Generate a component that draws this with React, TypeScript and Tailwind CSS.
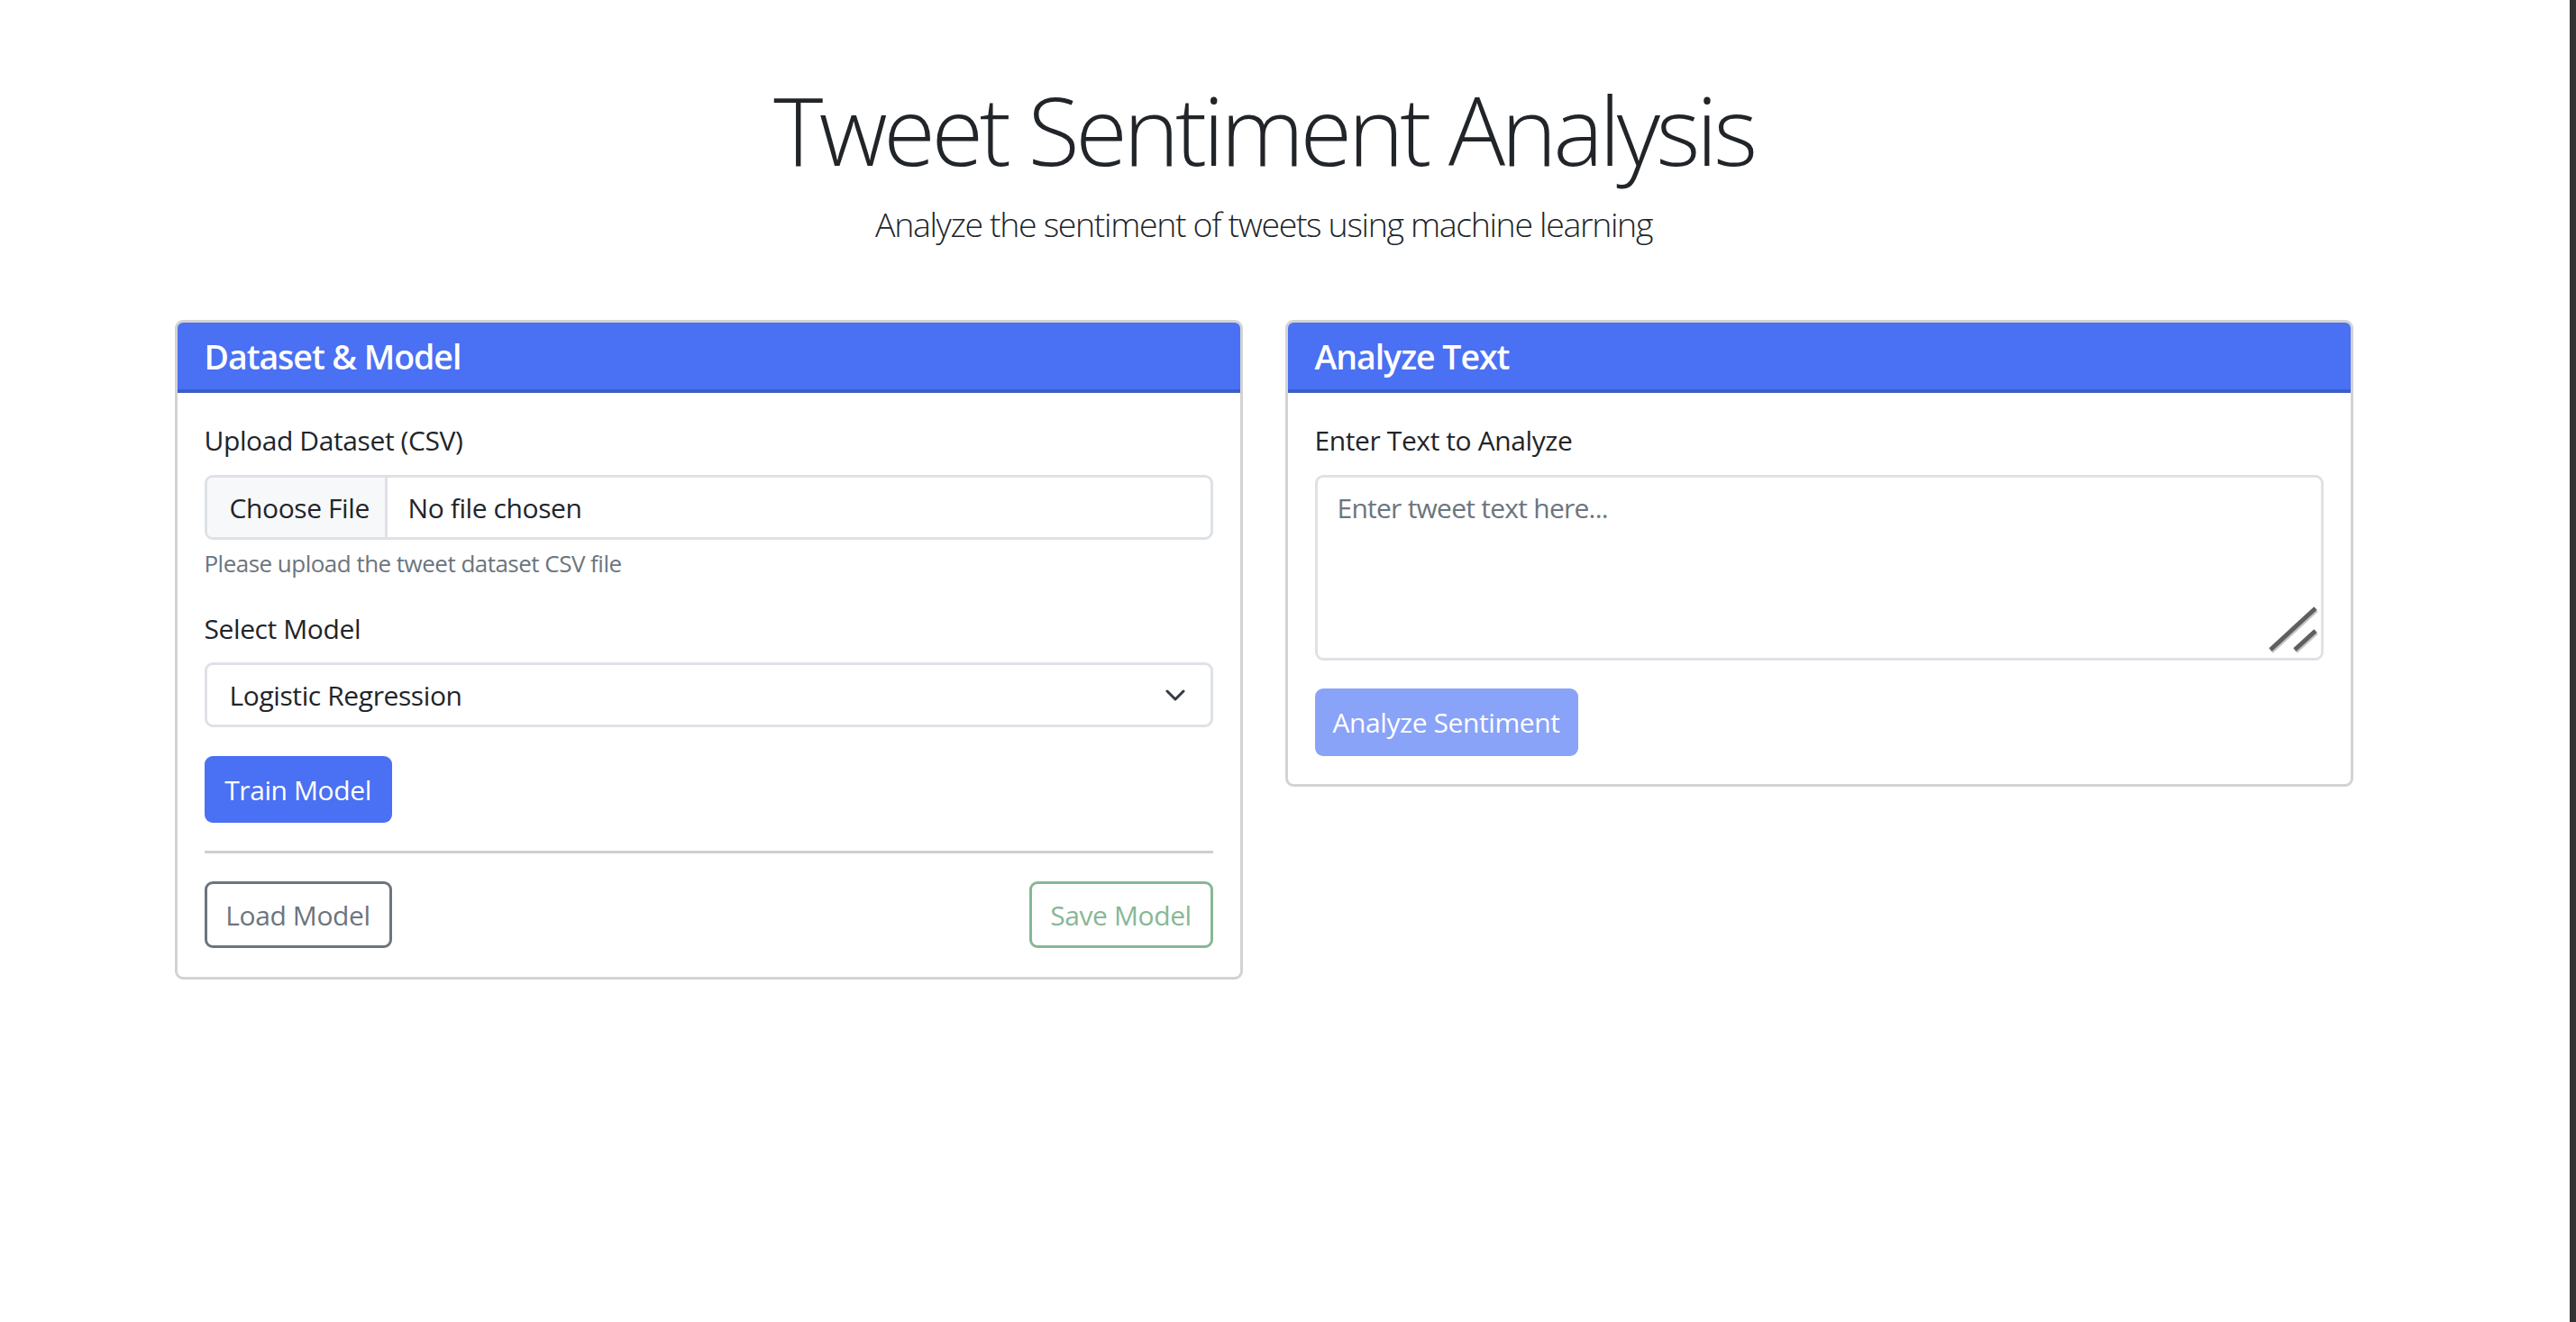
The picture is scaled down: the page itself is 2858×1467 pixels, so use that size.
export default function App() {
  return (
    <div className="flex min-h-[1467px] w-full bg-white text-[#212529] font-['Open_Sans','Noto_Sans',sans-serif] tracking-[-0.025em]">
      <div className="w-[2804px] shrink-0">
        <div className="mx-auto w-[2417px]">
          <header className="pt-[81px] text-center">
            <h1 className="text-[105px] font-light leading-[126px] tracking-[-0.042em]">Tweet Sentiment Analysis</h1>
            <p className="mt-[14px] text-[37.5px] font-light leading-[56px] tracking-[-0.036em]">
              Analyze the sentiment of tweets using machine learning
            </p>
          </header>

          <div className="mt-[78px] flex items-start gap-[47px]">
            {/* Card 1 */}
            <div className="w-[1185px] overflow-hidden rounded-[9px] border-[3px] border-[#d3d3d3]">
              <div className="flex h-[78px] items-center border-b-[4px] border-[#3c5fc8] bg-[#4a70f3] px-[30px]">
                <h5 className="text-[37.5px] font-semibold leading-[45px] tracking-[-0.028em] text-white">Dataset &amp; Model</h5>
              </div>
              <div className="px-[30px] pb-[32px] pt-[30px]">
                <label className="block text-[30px] leading-[45px]">Upload Dataset (CSV)</label>
                <div className="mt-[16px] flex h-[72px] overflow-hidden rounded-[9px] border-[3px] border-[#dee2e6] text-[30px] leading-[45px]">
                  <div className="flex w-[200px] shrink-0 items-center whitespace-nowrap border-r-[3px] border-[#dee2e6] bg-[#f7f8fa] px-[25px]">
                    Choose File
                  </div>
                  <div className="flex items-center whitespace-nowrap px-[23px]">No file chosen</div>
                </div>
                <p className="mt-[7px] text-[26px] leading-[39px] tracking-[-0.02em] text-[#6c757d]">
                  Please upload the tweet dataset CSV file
                </p>

                <label className="mt-[30px] block text-[30px] leading-[45px]">Select Model</label>
                <div className="mt-[15px] flex h-[72px] items-center justify-between rounded-[9px] border-[3px] border-[#dee2e6] pl-[25px] pr-[28px] text-[30px] leading-[45px]">
                  <span>Logistic Regression</span>
                  <svg width="22" height="13" viewBox="0 0 22 13" fill="none">
                    <path d="M2 2 L11 11 L20 2" stroke="#343a40" strokeWidth="3" strokeLinecap="round" strokeLinejoin="round" />
                  </svg>
                </div>

                <button className="mt-[32px] flex h-[74px] w-[208px] items-center justify-center rounded-[9px] bg-[#4a70f3] text-[30px] leading-[45px] text-white">
                  Train Model
                </button>

                <hr className="mt-[31px] border-0 border-t-[3px] border-[#cfcfcf]" />

                <div className="mt-[31px] flex items-center justify-between">
                  <button className="flex h-[74px] w-[208px] items-center justify-center rounded-[9px] border-[3px] border-[#6c757d] text-[30px] leading-[45px] text-[#6c757d]">
                    Load Model
                  </button>
                  <button className="flex h-[74px] w-[204px] items-center justify-center rounded-[9px] border-[3px] border-[#87b795] text-[30px] leading-[45px] text-[#87b795]">
                    Save Model
                  </button>
                </div>
              </div>
            </div>

            {/* Card 2 */}
            <div className="w-[1185px] overflow-hidden rounded-[9px] border-[3px] border-[#d3d3d3]">
              <div className="flex h-[78px] items-center border-b-[4px] border-[#3c5fc8] bg-[#4a70f3] px-[30px]">
                <h5 className="text-[37.5px] font-semibold leading-[45px] tracking-[-0.028em] text-white">Analyze Text</h5>
              </div>
              <div className="px-[30px] pb-[31px] pt-[30px]">
                <label className="block text-[30px] leading-[45px]">Enter Text to Analyze</label>
                <div className="relative mt-[16px]">
                  <textarea
                    className="block h-[206px] w-full resize-none rounded-[9px] border-[3px] border-[#dee2e6] px-[22px] pt-[11px] text-[30px] leading-[45px] tracking-[-0.025em] outline-none placeholder:text-[#6c757d]"
                    placeholder="Enter tweet text here..."
                  />
                  <svg className="absolute bottom-[8px] right-[6px]" width="56" height="52" viewBox="0 0 56 52" fill="none">
                    <path d="M4 50 L54 4" stroke="#c4c4c4" strokeWidth="5" />
                    <path d="M31 50 L54 29" stroke="#c4c4c4" strokeWidth="5" />
                    <path d="M3 48 L53 2" stroke="#5f5f5f" strokeWidth="5" />
                    <path d="M30 48 L53 27" stroke="#5f5f5f" strokeWidth="5" />
                  </svg>
                </div>
                <button className="mt-[31px] flex h-[75px] w-[292px] items-center justify-center rounded-[9px] bg-[#89a3f8] text-[30px] leading-[45px] text-white">
                  Analyze Sentiment
                </button>
              </div>
            </div>
          </div>
        </div>
      </div>
      <div className="flex-1" />
      <div className="w-[7px] shrink-0 bg-[#333333]" />
    </div>
  );
}
